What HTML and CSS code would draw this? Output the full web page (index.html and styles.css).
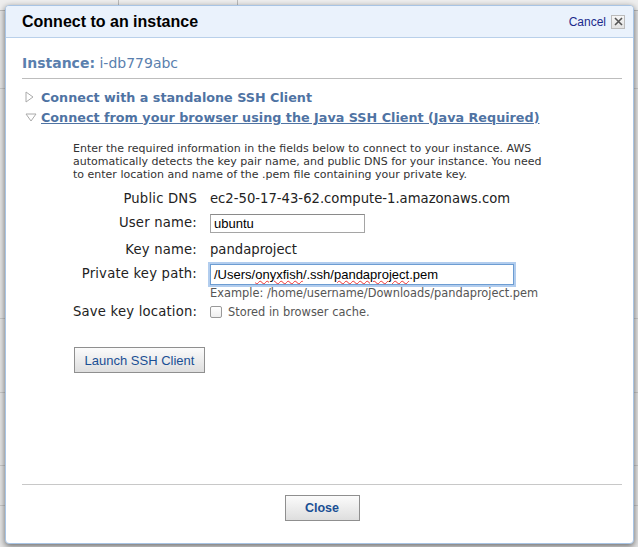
FILE: index.html
```html
<!DOCTYPE html>
<html>
<head>
<meta charset="utf-8">
<link rel="stylesheet" href="styles.css">
</head>
<body>
<div class="backdrop">
  <div class="bg-row"><span class="bg-cell"></span><span class="bg-cell"></span></div>
  <div class="bg-line l1"></div>
  <div class="bg-line l2"></div>
  <div class="bg-line l3"></div>
  <div class="bg-line l4"></div>
  <div class="bg-line l5"></div>
</div>
<div class="dialog">
  <div class="header">
    <div class="title">Connect to an instance</div>
    <div class="cancel"><span class="cancel-link">Cancel</span><span class="close-x"><svg width="9" height="9" viewBox="0 0 9 9"><path d="M1 1 L8 8 M8 1 L1 8" stroke="#555" stroke-width="1.6"/></svg></span></div>
  </div>
  <div class="body">
    <div class="instance"><b>Instance:</b> i-db779abc</div>
    <div class="section collapsed"><span class="tri"><svg width="9" height="12" viewBox="0 0 9 12"><path d="M1 1 L8 6 L1 11 Z" fill="#fff" stroke="#aaa"/></svg></span><span class="sec-title">Connect with a standalone SSH Client</span></div>
    <div class="section expanded"><span class="tri"><svg width="12" height="9" viewBox="0 0 12 9"><path d="M1 1 L11 1 L6 8 Z" fill="#fff" stroke="#aaa"/></svg></span><span class="sec-title u">Connect from your browser using the Java SSH Client (Java Required)</span></div>
    <div class="panel">
      <p class="desc">Enter the required information in the fields below to connect to your instance. AWS automatically detects the key pair name, and public DNS for your instance. You need to enter location and name of the .pem file containing your private key.</p>
      <div class="form">
        <div class="lbl">Public DNS</div><div class="val">ec2-50-17-43-62.compute-1.amazonaws.com</div>
        <div class="lbl">User name:</div><div class="val"><span class="input user">ubuntu</span></div>
        <div class="lbl gap">Key name:</div><div class="val gap">pandaproject</div>
        <div class="lbl">Private key path:</div><div class="val"><span class="input path focus">/Users/<span class="spell">onyxfish</span>/.ssh/<span class="spell">pandaproject</span>.pem</span><div class="hint">Example: /home/username/Downloads/pandaproject.pem</div></div>
        <div class="lbl">Save key location:</div><div class="val"><span class="check"></span><span class="hint">Stored in browser cache.</span></div>
      </div>
      <div class="launch-wrap"><span class="btn launch">Launch SSH Client</span></div>
    </div>
    <div class="footer"><span class="btn close">Close</span></div>
  </div>
</div>
</body>
</html>
```
FILE: styles.css
```css
html, body { margin: 0; padding: 0; }
body {
  width: 638px; height: 547px; overflow: hidden; position: relative;
  background: #e4e4e4;
  font-family: "DejaVu Sans", Verdana, sans-serif;
}
.backdrop { position: absolute; inset: 0; }
.bg-row { display: flex; height: 10px; border-bottom: 1px solid #bbb; background: #eee; }
.bg-cell { width: 118px; border-right: 1px solid #bbb; }
.bg-line { position: absolute; left: 0; right: 0; height: 1px; background: #c8c8c8; }
.l1 { top: 88px; } .l2 { top: 318px; } .l3 { top: 392px; } .l4 { top: 465px; } .l5 { top: 505px; }
.dialog {
  position: absolute; left: 5px; top: 5px; width: 627px; height: 537px;
  background: #fff; border: 1px solid #a8c4e4; border-radius: 4px;
  box-shadow: 0 2px 6px rgba(0,0,0,0.55);
  display: flex; flex-direction: column; overflow: hidden;
}
.header {
  height: 31px; background: #eaf2fc; border-bottom: 1px solid #b9d0ea;
  display: flex; align-items: center; justify-content: space-between;
  padding: 0 8px 0 16px;
}
.title { font-family: "Liberation Sans", Arial, sans-serif; font-weight: bold; font-size: 16px; color: #000; }
.cancel { display: flex; align-items: center; gap: 5px; }
.cancel-link { font-family: "Liberation Sans", Arial, sans-serif; font-size: 12px; color: #1c2a8c; }
.close-x { width: 12px; height: 12px; border: 1px solid #bbb; background: linear-gradient(#f6f6f6, #e2e2e2); display: flex; align-items: center; justify-content: center; }
.body { flex: 1; display: flex; flex-direction: column; padding: 0 11px 0 16px; }
.instance {
  margin-top: 16px; padding-bottom: 6px; border-bottom: 1px solid #bdbdbd;
  font-size: 14px; color: #5a7fae; line-height: 18px;
}
.instance b { font-weight: bold; }
.section { display: flex; align-items: center; height: 20px; font-size: 12.75px; font-weight: bold; color: #4f73a3; }
.section.collapsed { margin-top: 8px; }
.tri { width: 19px; display: flex; align-items: center; padding-left: 3px; box-sizing: border-box; }
.sec-title.u { text-decoration: underline; }
.panel { padding-left: 51px; }
.desc { margin: 15px 0 0 0; font-size: 11px; line-height: 13px; color: #333; width: 478px; }
.form {
  margin-top: 6px; display: grid; grid-template-columns: 124px auto; column-gap: 13px;
  align-items: start; font-size: 13.2px; color: #222;
}
.lbl { text-align: right; line-height: 24px; letter-spacing: 0.2px; white-space: nowrap; }
.val { line-height: 24px; white-space: nowrap; }
.gap { margin-top: 3px; }
.input {
  display: inline-block; box-sizing: border-box; height: 19px; line-height: 17px; vertical-align: middle;
  border: 1px solid #a5a5a5; border-top-color: #8a8a8a; padding: 0 3px;
  font-family: "Liberation Sans", Arial, sans-serif; font-size: 13px; color: #000;
}
.user { width: 155px; }
.path { width: 304px; height: 21px; line-height: 19px; }
.focus { border: 1px solid #6d9dd2; box-shadow: 0 0 0 2px #b2cdee; }
.spell { text-decoration: underline wavy #e33; text-decoration-thickness: 1px; }
.hint { font-size: 11.4px; color: #555; line-height: 14px; }
.val .hint { display: block; }
.val .check + .hint { display: inline; }
.check {
  display: inline-block; width: 10px; height: 10px; border: 1px solid #999; border-radius: 2px;
  background: linear-gradient(#fff, #eee); vertical-align: middle; margin-right: 6px;
}
.launch-wrap { margin-top: 23px; margin-left: 1px; }
.btn {
  display: inline-flex; align-items: center; justify-content: center; box-sizing: border-box;
  border: 1px solid #8f8f8f; background: linear-gradient(#fbfbfb, #dedede);
  font-family: "Liberation Sans", Arial, sans-serif; font-size: 13px; color: #1a4f94;
}
.launch { width: 131px; height: 26px; }
.footer {
  margin-top: auto; margin-bottom: 22px; border-top: 1px solid #c8c8c8;
  padding-top: 10px; display: flex; justify-content: center;
}
.close { width: 75px; height: 26px; font-weight: bold; font-size: 12.5px; }
```
